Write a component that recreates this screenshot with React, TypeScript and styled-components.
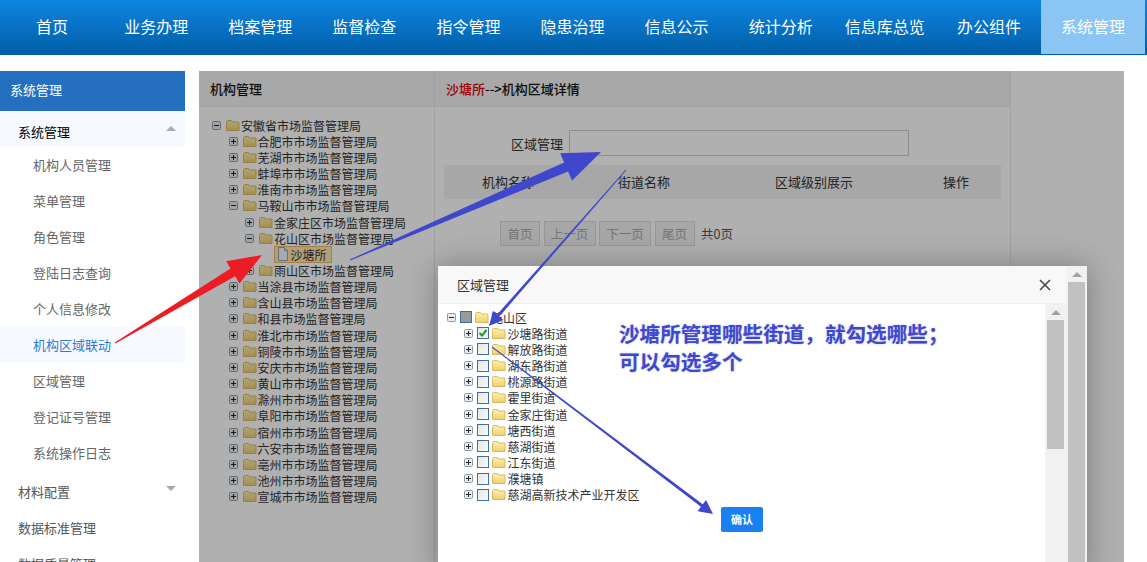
import React from "react";
import styled, { createGlobalStyle } from "styled-components";

const FONT = `"Noto Sans CJK SC", "Liberation Sans", sans-serif`;

const Global = createGlobalStyle`
  html, body { margin: 0; padding: 0; background: #fff; }
  body { font-family: ${FONT}; overflow: hidden; }
  * { box-sizing: border-box; }
`;

const Page = styled.div`
  position: relative;
  width: 1147px;
  height: 562px;
  overflow: hidden;
  display: flex;
  flex-direction: column;
`;

const TopNav = styled.nav`
  display: flex;
  height: 55px;
  flex: none;
  padding-right: 2px;
  background: linear-gradient(#0f85e2, #005ea6);
  border-bottom: 1px solid #005a9e;
`;

const NavItem = styled.a<{ $active?: boolean }>`
  flex: 1;
  height: 54px;
  line-height: 53px;
  text-align: center;
  color: #fff;
  font-size: 16px;
  background: ${(p) => (p.$active ? "#8bc5f4" : "transparent")};
`;

const Content = styled.div`
  display: flex;
  flex: 1;
  min-height: 0;
  padding-top: 16px;
`;

const Sidebar = styled.aside`
  width: 185px;
  flex: none;
  overflow: hidden;
`;

const SideTitle = styled.div`
  height: 40px;
  line-height: 38px;
  padding-left: 10px;
  font-size: 13px;
  color: #fff;
  background: #2470bf;
`;

const SideSection = styled.div<{ $open?: boolean; $gap?: boolean }>`
  display: flex;
  align-items: center;
  justify-content: space-between;
  height: 36px;
  padding: ${(p) => (p.$open ? "4px" : "0")} 9px 0 18px;
  margin-top: ${(p) => (p.$gap ? "2px" : "0")};
  font-size: 13px;
  color: ${(p) => (p.$open ? "#000" : "#555")};
  background: ${(p) => (p.$open ? "#f6f9ff" : "transparent")};
`;

const Caret = styled.i<{ $up?: boolean }>`
  width: 0;
  height: 0;
  margin-bottom: 6px;
  border-left: 5px solid transparent;
  border-right: 5px solid transparent;
  ${(p) =>
    p.$up
      ? "border-bottom: 5px solid #a9a9a9;"
      : "border-top: 5px solid #a9a9a9;"}
`;

const SideItem = styled.div<{ $active?: boolean }>`
  height: 36px;
  line-height: 36px;
  padding-left: 33px;
  font-size: 13px;
  color: ${(p) => (p.$active ? "#2f7ccf" : "#666")};
  background: ${(p) => (p.$active ? "#f6f9ff" : "transparent")};
`;

const Main = styled.main`
  position: relative;
  display: flex;
  width: 925px;
  margin-left: 14px;
  background: #fff;
`;

const Panel = styled.section<{ $w: number; $flush?: boolean }>`
  width: ${(p) => p.$w}px;
  flex: none;
  border-right: ${(p) => (p.$flush ? "none" : "1px solid #e8e8e8")};
`;

const PanelHead = styled.header`
  height: 36px;
  line-height: 35px;
  padding-left: 11px;
  font-size: 13px;
  font-weight: 500;
  color: #111;
  background: #f4f4f4;
  border-bottom: 1px solid #eee;
`;

const RedText = styled.span`
  color: #e00000;
`;

const OrgTree = styled.div`
  padding-top: 10px;
`;

const Row = styled.div<{ $level: number; $base: number; $pitch?: number }>`
  display: flex;
  align-items: center;
  height: 16.17px;
  padding-left: ${(p) => p.$base + p.$level * 16.5}px;
  font-size: 12px;
  color: #333;
  white-space: nowrap;
`;

const LeafBox = styled.span`
  display: flex;
  align-items: center;
  height: 17px;
  margin-left: -2px;
  padding: 0 3px 0 2px;
  width: 58px;
  background: #ffe6b0;
  border: 1px solid #f0b860;
`;

const RowLabel = styled.span<{ $leaf?: boolean }>`
  margin-left: ${(p) => (p.$leaf ? "2px" : "1px")};
`;

const Spacer = styled.span`
  width: 14px;
  flex: none;
`;

const Form = styled.div`
  display: flex;
  align-items: center;
  padding: 23px 0 0 76px;
  font-size: 13px;
  color: #333;
`;

const AreaInput = styled.div`
  width: 340px;
  height: 26px;
  margin-left: 6px;
  background: #fff;
  border: 1px solid #ccc;
`;

const TableHead = styled.div`
  display: grid;
  grid-template-columns: 174px 157px 168px 59px;
  height: 34px;
  margin: 9px 9px 0;
  line-height: 34px;
  font-size: 13px;
  color: #333;
  background: #f2f2f2;
`;

const HeadCell = styled.span<{ $pad: number }>`
  padding-left: ${(p) => p.$pad}px;
  white-space: nowrap;
`;

const Pager = styled.div`
  display: flex;
  align-items: center;
  gap: 3.5px;
  margin-top: 22px;
  padding-left: 65px;
  font-size: 12.5px;
  color: #888;
`;

const PageBtn = styled.span<{ $w: number }>`
  display: block;
  width: ${(p) => p.$w}px;
  height: 25px;
  line-height: 23px;
  text-align: center;
  color: #aaa;
  background: #f2f2f2;
  border: 1px solid #ddd;
`;

const PageTotal = styled.span`
  margin-left: 3px;
  color: #555;
`;

const Dim = styled.div`
  position: absolute;
  inset: 0;
  background: rgba(0, 0, 0, 0.31);
`;

const Modal = styled.div`
  position: absolute;
  left: 239px;
  top: 195px;
  width: 649px;
  height: 310px;
  display: flex;
  background: #fff;
  box-shadow: 0 0 30px rgba(0, 0, 0, 0.3);
  overflow: hidden;
`;

const ModalMain = styled.div`
  flex: 1;
  display: flex;
  flex-direction: column;
  min-width: 0;
`;

const ModalHead = styled.div`
  display: flex;
  align-items: center;
  justify-content: space-between;
  height: 38px;
  padding: 0 15px 0 19px;
  font-size: 13px;
  color: #333;
  background: #f8f8f8;
  border-bottom: 1px solid #eee;
`;

const ModalBody = styled.div`
  flex: 1;
  display: flex;
  min-height: 0;
`;

const ModalContent = styled.div`
  flex: 1;
  padding-top: 5px;
  position: relative;
`;

const ScrollBar = styled.div<{ $top: number }>`
  width: 21px;
  flex: none;
  padding: 6px 2px 0;
  display: flex;
  flex-direction: column;
  align-items: center;
  background: #f1f1f1;
`;

const ScrollUp = styled.i`
  width: 0;
  height: 0;
  border-left: 5px solid transparent;
  border-right: 5px solid transparent;
  border-bottom: 5px solid #a3a3a3;
`;

const ScrollThumb = styled.div<{ $h: number }>`
  width: 17px;
  height: ${(p) => p.$h}px;
  margin-top: 5px;
  background: #c1c1c1;
  flex: none;
`;

const ConfirmBtn = styled.button`
  display: block;
  width: 42px;
  height: 25px;
  margin: 4px 0 0 283px;
  padding: 0;
  border: 0;
  border-radius: 2px;
  font: 700 11px ${FONT};
  color: #fff;
  background: #1a7ff0;
`;

const CheckSlot = styled.span<{ $mixed?: boolean }>`
  width: 12px;
  height: 12px;
  margin-right: 3px;
  flex: none;
  display: flex;
  background: ${(p) => (p.$mixed ? "#9a9a9a" : "linear-gradient(135deg,#e6e6e6,#fafafa)")};
  border: 1px solid #3f6f9f;
`;

const Annotation = styled.div`
  position: absolute;
  left: 619px;
  top: 319px;
  font-size: 20.6px;
  line-height: 28px;
  font-weight: 700;
  color: #3f48cc;
  text-shadow: 0 0 2px rgba(120, 130, 230, 0.6);
  white-space: nowrap;
`;

const ArrowLayer = styled.svg`
  position: absolute;
  left: 0;
  top: 0;
  pointer-events: none;
`;

function Expander({ open, mr }: { open?: boolean; mr: number }) {
  return (
    <svg width="9" height="9" viewBox="0 0 9 9" style={{ flex: "none", marginRight: mr }}>
      <rect x="0.5" y="0.5" width="8" height="8" rx="1" fill="#e8ecef" stroke="#8c9aa8" />
      <path d={open ? "M2 4.5h5" : "M2 4.5h5M4.5 2v5"} stroke="#222" strokeWidth="1" />
    </svg>
  );
}

function Folder({ open, mr = 0 }: { open?: boolean; mr?: number }) {
  return (
    <svg width="14" height="13" viewBox="0 0 14 13" style={{ flex: "none", marginRight: mr }}>
      <defs>
        <linearGradient id="fg" x1="0" y1="0" x2="0" y2="1">
          <stop offset="0" stopColor="#fdf0b0" />
          <stop offset="1" stopColor="#f0cf70" />
        </linearGradient>
      </defs>
      <path
        d={open ? "M.5 3.5 1.5 1.5h4l1 1.5h6l.5 1.5v7H.5z" : "M.5 2.5 1.5 1.5h4l1 1.5h6.5v8.5H.5z"}
        fill="url(#fg)"
        stroke="#d9b860"
      />
    </svg>
  );
}

function FileIcon() {
  return (
    <svg width="12" height="14" viewBox="0 0 12 14" style={{ flex: "none" }}>
      <path d="M1.5.5h6l3 3v10h-9z" fill="#f3f6fb" stroke="#8fa3bf" />
      <path d="M7.5.5v3h3" fill="#dfe7f2" stroke="#8fa3bf" />
    </svg>
  );
}

function Check() {
  return (
    <svg width="10" height="10" viewBox="0 0 10 10">
      <path d="M1.5 5 4 7.5 8.5 2" fill="none" stroke="#1a9a2a" strokeWidth="2" />
    </svg>
  );
}

function CloseIcon() {
  return (
    <svg width="12" height="12" viewBox="0 0 12 12">
      <path d="M1 1l10 10M11 1 1 11" stroke="#444" strokeWidth="1.5" />
    </svg>
  );
}

function arrowPoints(
  x1: number, y1: number, x2: number, y2: number,
  tail: number, neck: number, head: number, len: number,
) {
  const d = Math.hypot(x2 - x1, y2 - y1);
  const ux = (x2 - x1) / d, uy = (y2 - y1) / d;
  const nx = -uy, ny = ux;
  const bx = x2 - ux * len, by = y2 - uy * len;
  const p = (x: number, y: number, w: number) => `${x + (nx * w) / 2},${y + (ny * w) / 2}`;
  return [
    p(x1, y1, tail), p(bx, by, neck), p(bx, by, head), p(x2, y2, 0),
    p(bx, by, -head), p(bx, by, -neck), p(x1, y1, -tail),
  ].join(" ");
}

const navItems = ["首页", "业务办理", "档案管理", "监督检查", "指令管理", "隐患治理", "信息公示", "统计分析", "信息库总览", "办公组件", "系统管理"];
const sideItems = ["机构人员管理", "菜单管理", "角色管理", "登陆日志查询", "个人信息修改", "机构区域联动", "区域管理", "登记证号管理", "系统操作日志"];

type Node = { t: string; l: number; open?: boolean; leaf?: boolean };
const orgTree: Node[] = [
  { t: "安徽省市场监督管理局", l: 0, open: true },
  { t: "合肥市市场监督管理局", l: 1 },
  { t: "芜湖市市场监督管理局", l: 1 },
  { t: "蚌埠市市场监督管理局", l: 1 },
  { t: "淮南市市场监督管理局", l: 1 },
  { t: "马鞍山市市场监督管理局", l: 1, open: true },
  { t: "金家庄区市场监督管理局", l: 2 },
  { t: "花山区市场监督管理局", l: 2, open: true },
  { t: "沙塘所", l: 3, leaf: true },
  { t: "雨山区市场监督管理局", l: 2 },
  { t: "当涂县市场监督管理局", l: 1 },
  { t: "含山县市场监督管理局", l: 1 },
  { t: "和县市场监督管理局", l: 1 },
  { t: "淮北市市场监督管理局", l: 1 },
  { t: "铜陵市市场监督管理局", l: 1 },
  { t: "安庆市市场监督管理局", l: 1 },
  { t: "黄山市市场监督管理局", l: 1 },
  { t: "滁州市市场监督管理局", l: 1 },
  { t: "阜阳市市场监督管理局", l: 1 },
  { t: "宿州市市场监督管理局", l: 1 },
  { t: "六安市市场监督管理局", l: 1 },
  { t: "亳州市市场监督管理局", l: 1 },
  { t: "池州市市场监督管理局", l: 1 },
  { t: "宣城市市场监督管理局", l: 1 },
];
const streets = ["沙塘路街道", "解放路街道", "湖东路街道", "桃源路街道", "霍里街道", "金家庄街道", "塘西街道", "慈湖街道", "江东街道", "濮塘镇", "慈湖高新技术产业开发区"];

export default function App() {
  return (
    <Page>
      <Global />
      <TopNav>
        {navItems.map((n, i) => (
          <NavItem key={n + i} $active={i === navItems.length - 1}>{n}</NavItem>
        ))}
      </TopNav>
      <Content>
        <Sidebar>
          <SideTitle>系统管理</SideTitle>
          <SideSection $open>系统管理<Caret $up /></SideSection>
          {sideItems.map((s, i) => (
            <SideItem key={s} $active={i === 5}>{s}</SideItem>
          ))}
          <SideSection $gap>材料配置<Caret /></SideSection>
          <SideSection>数据标准管理</SideSection>
          <SideSection>数据质量管理</SideSection>
        </Sidebar>
        <Main>
          <Panel $w={236}>
            <PanelHead>机构管理</PanelHead>
            <OrgTree>
              {orgTree.map((n) => (
                <Row key={n.t} $level={n.l} $base={13}>
                  {n.leaf ? (
                    <>
                      <Spacer />
                      <LeafBox>
                        <FileIcon />
                        <RowLabel $leaf>{n.t}</RowLabel>
                      </LeafBox>
                    </>
                  ) : (
                    <>
                      <Expander open={n.open} mr={5} />
                      <Folder open={n.open} />
                      <RowLabel>{n.t}</RowLabel>
                    </>
                  )}
                </Row>
              ))}
            </OrgTree>
          </Panel>
          <Panel $w={576}>
            <PanelHead><RedText>沙塘所</RedText>--&gt;机构区域详情</PanelHead>
            <Form>
              区域管理
              <AreaInput />
            </Form>
            <TableHead>
              <HeadCell $pad={38}>机构名称</HeadCell>
              <HeadCell $pad={0}>街道名称</HeadCell>
              <HeadCell $pad={0}>区域级别展示</HeadCell>
              <HeadCell $pad={0}>操作</HeadCell>
            </TableHead>
            <Pager>
              <PageBtn $w={40}>首页</PageBtn>
              <PageBtn $w={52}>上一页</PageBtn>
              <PageBtn $w={52}>下一页</PageBtn>
              <PageBtn $w={40}>尾页</PageBtn>
              <PageTotal>共0页</PageTotal>
            </Pager>
          </Panel>
          <Panel $w={113} $flush />
          <Dim />
          <Modal>
            <ModalMain>
              <ModalHead>
                区域管理
                <CloseIcon />
              </ModalHead>
              <ModalBody>
                <ModalContent>
                  <Row $level={0} $base={9}>
                    <Expander open mr={4} />
                    <CheckSlot $mixed />
                    <Folder open mr={2} />
                    花山区
                  </Row>
                  {streets.map((s, i) => (
                    <Row key={s} $level={1} $base={9}>
                      <Expander mr={4} />
                      <CheckSlot>{i === 0 && <Check />}</CheckSlot>
                      <Folder mr={2} />
                      {s}
                    </Row>
                  ))}
                  <ConfirmBtn>确认</ConfirmBtn>
                </ModalContent>
                <ScrollBar $top={304}>
                  <ScrollUp />
                  <ScrollThumb $h={129} />
                </ScrollBar>
              </ModalBody>
            </ModalMain>
            <ScrollBar $top={266}>
              <ScrollUp />
              <ScrollThumb $h={280} />
            </ScrollBar>
          </Modal>
        </Main>
      </Content>
      <Annotation>
        沙塘所管理哪些街道，就勾选哪些；
        <br />
        可以勾选多个
      </Annotation>
      <ArrowLayer width="1147" height="562" viewBox="0 0 1147 562">
        <polygon points={arrowPoints(115, 343, 262, 255, 1, 9, 26, 34)} fill="#ed1c24" />
        <polygon points={arrowPoints(350, 260, 601, 152, 1, 10, 30, 38)} fill="#3f48cc" />
        <polygon points={arrowPoints(626, 170, 489, 326, 1, 3, 14, 14)} fill="#3f48cc" />
        <polygon points={arrowPoints(492, 347, 713, 514, 1, 3, 14, 14)} fill="#3f48cc" />
      </ArrowLayer>
    </Page>
  );
}
